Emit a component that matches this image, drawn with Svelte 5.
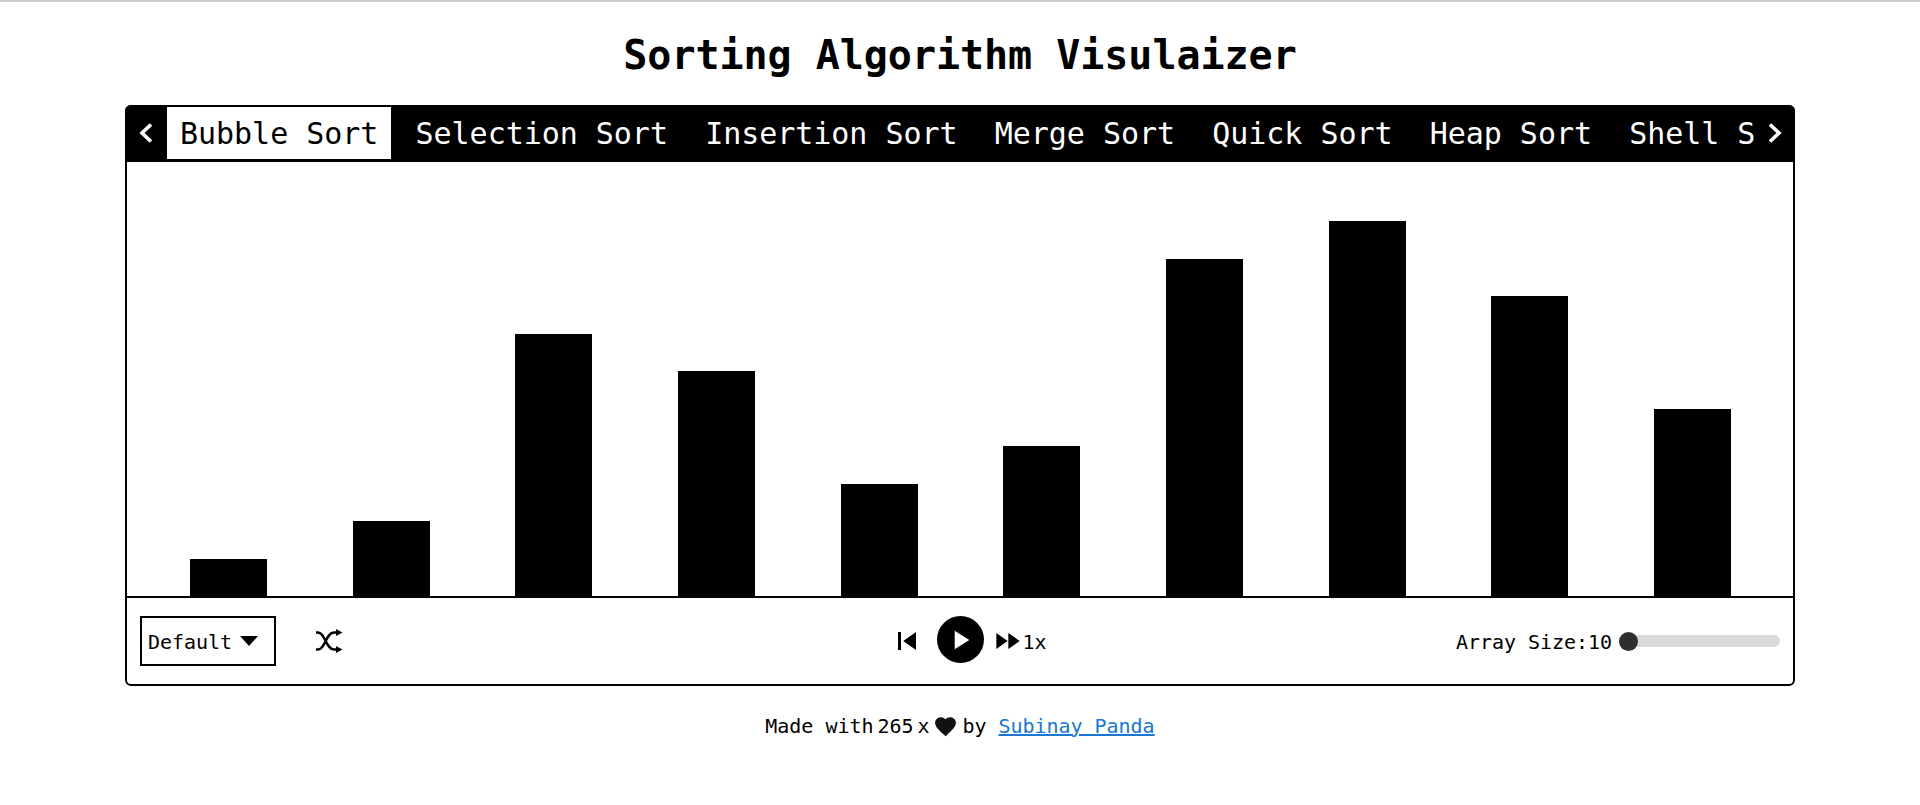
<script>
    const sorts = ['Bubble Sort', 'Selection Sort', 'Insertion Sort', 'Merge Sort', 'Quick Sort', 'Heap Sort', 'Shell Sort'];
    const values = [1, 2, 7, 6, 3, 4, 9, 10, 8, 5];
    let active = 'Bubble Sort';
    let size = 10;
</script>

<div class="page">
    <h1>Sorting Algorithm Visulaizer</h1>

    <div class="card">
        <div class="tabs">
            <button class="arrow" aria-label="Scroll left">
                <svg width="20" height="24" viewBox="0 0 20 24"><path d="M15 3.5 6 12l9 8.5" fill="none" stroke="currentColor" stroke-width="3.6"/></svg>
            </button>
            <div class="tab-list">
                {#each sorts as sort}
                    <button class="tab" class:active={sort === active} on:click={() => active = sort}>{sort}</button>
                {/each}
            </div>
            <button class="arrow next" aria-label="Scroll right">
                <svg width="20" height="24" viewBox="0 0 20 24"><path d="m5 3.5 9 8.5-9 8.5" fill="none" stroke="currentColor" stroke-width="3.6"/></svg>
            </button>
        </div>

        <div class="chart">
            {#each values as value}
                <div class="bar" style="height: {value * 37.5}px"></div>
            {/each}
        </div>

        <div class="controls">
            <div class="left">
                <div class="select">
                    <span>Default</span>
                    <svg width="18" height="10" viewBox="0 0 18 10"><path d="M0 0h18L9 10z"/></svg>
                </div>
                <button class="icon" aria-label="Shuffle">
                    <svg width="28" height="24" viewBox="0 0 28 24" fill="none" stroke="#000" stroke-width="2.4">
                        <path d="M1 3.5h2c7 0 8 17 16 17h4M1 20.5h2c7 0 8-17 16-17h4"/>
                        <path d="M21 0v7l6.500-3.500zM21 17v7l6.500-3.500z" fill="#000" stroke="none"/>
                    </svg>
                </button>
            </div>
            <div class="center">
                <button class="icon back" aria-label="Back">
                    <svg width="36" height="36" viewBox="0 0 24 24"><path d="M6 6h2v12H6zm3.500 6 8.500 6V6z"/></svg>
                </button>
                <button class="play" aria-label="Play">
                    <svg width="32" height="32" viewBox="0 0 24 24"><path d="M8 5v14l11-7z" fill="#fff"/></svg>
                </button>
                <div class="speed">
                    <button class="icon" aria-label="Speed">
                        <svg width="32" height="32" viewBox="0 0 24 24"><path d="m4 18 8.500-6L4 6v12zm9-12v12l8.500-6L13 6z"/></svg>
                    </button>
                    <span>1x</span>
                </div>
            </div>
            <div class="right">
                <span>Array Size:{size}</span>
                <input type="range" min="10" max="100" bind:value={size} />
            </div>
        </div>
    </div>

    <footer>
        <span>Made with</span>
        <span>265</span>
        <span>x</span>
        <svg class="heart" width="25" height="25" viewBox="0 0 24 24"><path d="m12 21.350-1.450-1.320C5.400 15.360 2 12.280 2 8.500 2 5.420 4.420 3 7.500 3c1.740 0 3.410.81 4.500 2.090C13.090 3.810 14.760 3 16.500 3 19.580 3 22 5.420 22 8.500c0 3.780-3.400 6.860-8.550 11.540L12 21.350z" fill="#111"/></svg>
        <span>by</span>
        <a href="#top">Subinay Panda</a>
    </footer>
</div>

<style>
    :global(body) {
        margin: 0;
        background: #fff;
        color: #000;
        font-family: 'DejaVu Sans Mono', 'Liberation Mono', monospace;
        letter-spacing: -0.002em;
    }

    .page {
        border-top: 2px solid #ccc;
        display: flex;
        flex-direction: column;
        align-items: center;
    }

    h1 {
        margin: 0;
        height: 103px;
        line-height: 106px;
        font-size: 40px;
        font-weight: 700;
    }

    button {
        border: none;
        background: none;
        padding: 0;
        font: inherit;
        letter-spacing: inherit;
        color: inherit;
        cursor: pointer;
        display: flex;
        align-items: center;
        justify-content: center;
    }

    .card {
        width: 1670px;
        box-sizing: border-box;
        border: 2px solid #000;
        border-radius: 6px;
    }

    .tabs {
        display: flex;
        align-items: center;
        height: 57px;
        box-sizing: border-box;
        background: #000;
        color: #fff;
        margin: -2px -2px 0;
        padding: 2px 0 3px;
        border-radius: 6px 6px 0 0;
    }

    .arrow {
        width: 42px;
        height: 100%;
        flex: none;
    }

    .arrow.next {
        width: 38px;
        padding-right: 2px;
        box-sizing: border-box;
    }

    .tab-list {
        flex: 1;
        display: flex;
        gap: 11.2px;
        height: 52px;
        overflow: hidden;
    }

    .tab {
        flex: none;
        padding: 0 13px;
        font-size: 30px;
        white-space: nowrap;
    }

    .tab.active {
        background: #fff;
        color: #000;
    }

    .chart {
        height: 436px;
        box-sizing: border-box;
        padding: 0 19px 0 20px;
        display: flex;
        justify-content: space-around;
        align-items: flex-end;
        border-bottom: 2px solid #000;
    }

    .bar {
        width: 77px;
        background: #000;
    }

    .controls {
        height: 86px;
        display: grid;
        grid-template-columns: 1fr auto 1fr;
        align-items: center;
        padding: 0 13px;
    }

    .left {
        display: flex;
        align-items: center;
        gap: 39px;
    }

    .select {
        width: 136px;
        height: 50px;
        box-sizing: border-box;
        border: 2px solid #000;
        padding: 0 16px 0 6px;
        display: flex;
        align-items: center;
        justify-content: space-between;
        font-size: 20px;
    }

    .select span,
    .speed span,
    .right span {
        padding-top: 2px;
    }

    .center {
        display: grid;
        grid-template-columns: 1fr auto 1fr;
        align-items: center;
        column-gap: 7px;
    }

    .back {
        justify-self: end;
        margin-right: 5px;
    }

    .play {
        width: 47px;
        height: 47px;
        border-radius: 50%;
        background: #000;
        margin-bottom: 3px;
    }

    .speed {
        display: flex;
        align-items: center;
        font-size: 20px;
    }

    .right {
        display: flex;
        align-items: center;
        justify-content: flex-end;
        gap: 7px;
        font-size: 20px;
    }

    input[type='range'] {
        appearance: none;
        -webkit-appearance: none;
        margin: 0;
        width: 161px;
        height: 12px;
        border-radius: 6px;
        background: #d9d9d9;
    }

    input[type='range']::-webkit-slider-thumb {
        -webkit-appearance: none;
        width: 19px;
        height: 19px;
        border-radius: 50%;
        background: #2e2e2e;
    }

    footer {
        display: flex;
        align-items: center;
        gap: 4px;
        margin-top: 26px;
        font-size: 20px;
    }

    .heart {
        margin-top: 2px;
    }

    footer a {
        margin-left: 8px;
        color: #1976d2;
    }
</style>
